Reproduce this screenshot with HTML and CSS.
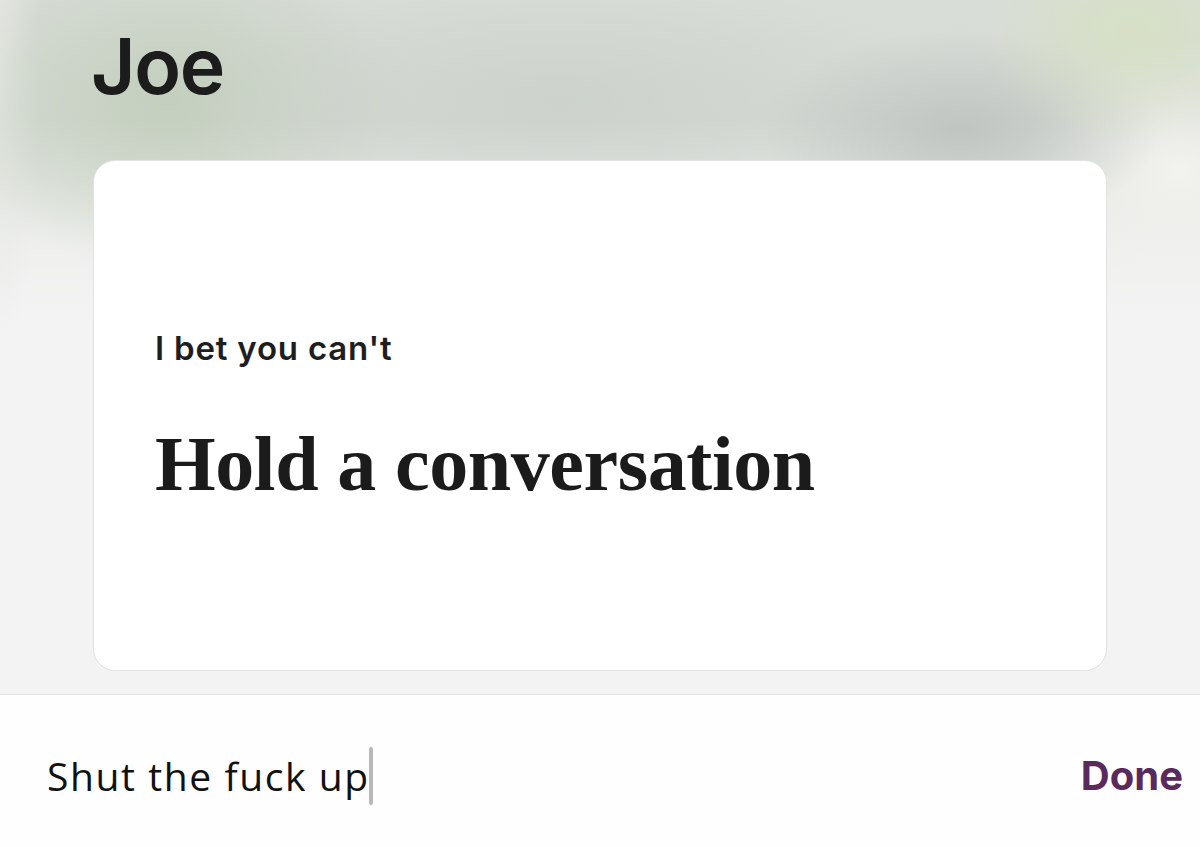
FILE: index.html
```html
<!DOCTYPE html>
<html>
<head>
<meta charset="utf-8">
<link rel="stylesheet" href="styles.css">
</head>
<body>
<div class="screen">
  <header class="header">
    <h1 class="name">Joe</h1>
  </header>
  <section class="card">
    <p class="prompt">I bet you can't</p>
    <h2 class="answer">Hold a conversation</h2>
  </section>
  <footer class="composer">
    <div class="input"><span class="typed">Shut the fuck up</span><span class="caret"></span></div>
    <button class="done">Done</button>
  </footer>
</div>
</body>
</html>
```
FILE: styles.css
```css
html, body {
  margin: 0;
  padding: 0;
}
body {
  width: 1200px;
  height: 847px;
  overflow: hidden;
  background: #f3f3f3;
}
.screen {
  width: 1200px;
  height: 847px;
  display: flex;
  flex-direction: column;
  background:
    radial-gradient(ellipse 150px 110px at 1130px 30px, rgba(214,224,196,0.95), rgba(214,224,196,0) 100%),
    radial-gradient(ellipse 200px 100px at 960px 130px, rgba(188,194,190,0.9), rgba(188,194,190,0) 100%),
    radial-gradient(ellipse 380px 130px at 560px 100px, rgba(200,206,200,0.7), rgba(200,206,200,0) 100%),
    radial-gradient(ellipse 240px 170px at 170px 100px, rgba(194,206,188,0.95), rgba(194,206,188,0) 100%),
    radial-gradient(ellipse 160px 130px at 1180px 170px, rgba(242,242,238,1), rgba(242,242,238,0) 100%),
    radial-gradient(ellipse 40px 300px at 0px 60px, rgba(232,234,230,0.9), rgba(232,234,230,0) 100%),
    linear-gradient(to bottom, #d9ddd8 0px, #d6dad5 120px, #e4e7e3 190px, #eff0ee 250px, #f3f3f3 320px, #f3f3f3 100%);
}
.header {
  height: 160px;
  flex: none;
  padding-left: 91px;
  box-sizing: border-box;
}
.name {
  margin: 0;
  padding-top: 21px;
  font-family: Inter, "Liberation Sans", sans-serif;
  font-weight: 600;
  font-size: 77px;
  line-height: 90px;
  letter-spacing: -1.4px;
  color: #1c1c1c;
}
.card {
  flex: none;
  height: 511px;
  margin: 0 93px;
  box-sizing: border-box;
  background: #ffffff;
  border: 1px solid #e2e2e2;
  border-radius: 22px;
  display: flex;
  flex-direction: column;
  justify-content: center;
  padding: 0 0 0 61px;
}
.prompt {
  margin: 0 0 56px 0;
  font-family: Inter, "Liberation Sans", sans-serif;
  font-weight: 600;
  font-size: 33px;
  line-height: 40px;
  color: #1e1e1e;
  letter-spacing: 0.8px;
}
.answer {
  margin: 0;
  font-family: "Liberation Serif", serif;
  font-weight: 700;
  font-size: 78px;
  line-height: 80px;
  letter-spacing: -0.4px;
  color: #1b1b1b;
}
.composer {
  flex: 1;
  margin-top: 23px;
  background: #fefefe;
  border-top: 1px solid #e0e0e0;
  display: flex;
  align-items: center;
  justify-content: space-between;
  padding: 10px 17px 0 47px;
}
.input {
  display: flex;
  align-items: center;
}
.typed {
  font-family: "Open Sans", "Liberation Sans", sans-serif;
  font-weight: 400;
  font-size: 39px;
  line-height: 50px;
  color: #111111;
  letter-spacing: 1.6px;
}
.caret {
  display: block;
  width: 4px;
  height: 58px;
  margin-left: -1px;
  border-radius: 2px;
  background: #b8b8b8;
}
.done {
  border: 0;
  background: none;
  padding: 0;
  font-family: Inter, "Liberation Sans", sans-serif;
  font-weight: 700;
  font-size: 40px;
  line-height: 50px;
  color: #5b2a5d;
  letter-spacing: 0px;
}
```
